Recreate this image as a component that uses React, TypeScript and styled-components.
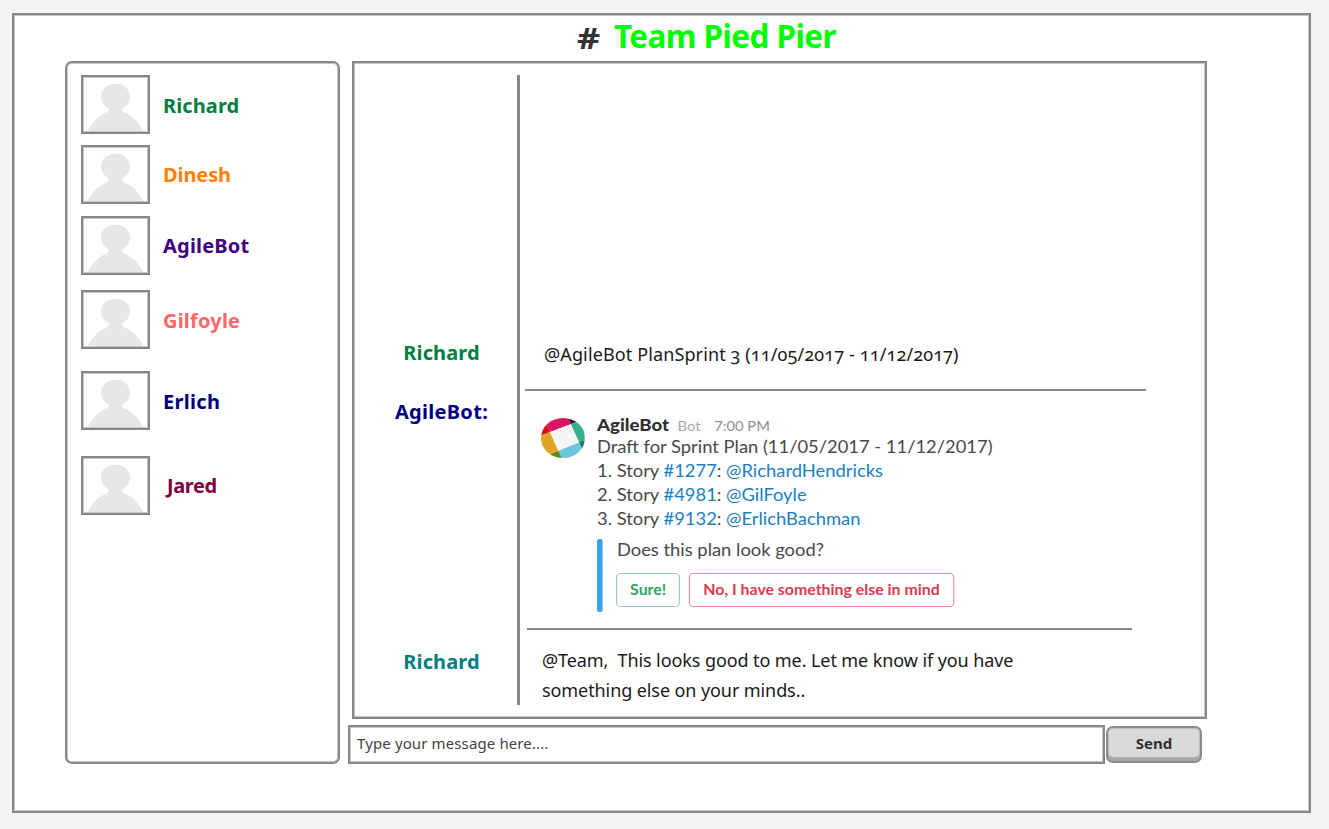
import React from 'react';
import styled, { createGlobalStyle, css } from 'styled-components';

const GlobalStyle = createGlobalStyle`
  *, *::before, *::after { box-sizing: border-box; }
  body {
    margin: 0;
    background: #f4f4f4;
    font-family: "Noto Sans", "Open Sans", sans-serif;
    color: #1a1a1a;
  }
`;

const outline = css`
  background: #fff;
  border: 2px solid #888;
  box-shadow: inset 0 0 0 1px #c6c6c6;
`;

const Page = styled.div`
  padding: 13px 18px 16px 12px;
  height: 829px;
`;

const Frame = styled.main`
  ${outline}
  width: 1299px;
  height: 800px;
`;

const Header = styled.header`
  display: flex;
  align-items: flex-start;
  height: 46px;
  padding-left: 563px;
  gap: 14px;
`;

const Hash = styled.span`
  width: 23px;
  font-size: 29px;
  line-height: 46px;
  font-weight: 700;
  color: #333;
  transform: scaleX(1.24);
  transform-origin: left;
`;

const Title = styled.h1`
  margin: 0;
  font-size: 31.5px;
  line-height: 42px;
  font-weight: 700;
  letter-spacing: -0.6px;
  color: #0f0;
  white-space: nowrap;
`;

const Body = styled.div`
  display: flex;
  align-items: flex-start;
  gap: 12px;
  padding-left: 51px;
`;

const Sidebar = styled.aside`
  ${outline}
  width: 275px;
  height: 703px;
  border-radius: 7px;
  padding: 12px 14px;
`;

const Member = styled.div<{ $before: number }>`
  display: flex;
  align-items: center;
  height: 59px;
  margin-top: ${(p) => p.$before}px;
`;

const AvatarBox = styled.div`
  ${outline}
  width: 69px;
  height: 59px;
  flex: none;

  svg { display: block; }
`;

const Name = styled.span<{ $color: string; $indent?: number; $drop?: number; $spacing?: number }>`
  margin-left: ${(p) => p.$indent ?? 0}px;
  padding-top: ${(p) => p.$drop ?? 0}px;
  font-size: 20px;
  line-height: 28px;
  font-weight: 700;
  letter-spacing: ${(p) => p.$spacing ?? 0.1}px;
  color: ${(p) => p.$color};
  white-space: nowrap;
`;

const Main = styled.section`
  display: flex;
  flex-direction: column;
  gap: 6px;
`;

const Chat = styled.div`
  ${outline}
  display: flex;
  width: 855px;
  height: 658px;
  padding: 12px 0;
`;

const Senders = styled.div`
  display: flex;
  flex-direction: column;
  align-items: center;
  width: 163px;
  padding-left: 12px;
`;

const Sender = styled.div<{ $before: number }>`
  height: 28px;
  margin-top: ${(p) => p.$before}px;
`;

const Rule = styled.div`
  width: 3px;
  background: #888;
`;

const Feed = styled.div`
  display: flex;
  flex-direction: column;
`;

const Message = styled.p<{ $before: number; $indent: number; $spacing: number }>`
  margin: ${(p) => p.$before}px 0 0 ${(p) => p.$indent}px;
  font-size: 18px;
  line-height: 30px;
  letter-spacing: ${(p) => p.$spacing}px;
  font-feature-settings: "onum";
  white-space: pre;
`;

const Divider = styled.div<{ $before: number; $indent: number; $width: number }>`
  width: ${(p) => p.$width}px;
  height: 2px;
  margin: ${(p) => p.$before}px 0 0 ${(p) => p.$indent}px;
  background: #888;
`;

const BotCard = styled.article`
  display: flex;
  height: 199px;
  width: 400px;
  margin: 22px 0 0 21px;
  font-family: Lato, "Open Sans", sans-serif;
  color: #48484a;
  transform: scaleX(1.12);
  transform-origin: left top;
  white-space: nowrap;
`;

const BotLogo = styled.svg`
  flex: none;
  width: 39.3px;
  height: 40px;
  margin: 5px 10.7px 0 0;
`;

const BotHeader = styled.div`
  display: flex;
  align-items: baseline;
  height: 22px;
  line-height: 24px;
`;

const BotName = styled.strong`
  font-size: 16.6px;
  font-weight: 900;
  color: #2f3033;
`;

const BotTag = styled.span`
  margin-left: 6.5px;
  padding: 0 1px;
  font-size: 13.4px;
  line-height: 14px;
  background: #fafafa;
  color: #aaa;
`;

const BotTime = styled.time`
  margin-left: 11px;
  font-size: 13.2px;
  color: #8d8d91;
`;

const BotLine = styled.div`
  font-size: 16.4px;
  line-height: 24px;
`;

const Link = styled.a`
  color: #1a80c0;
`;

const Quote = styled.div`
  display: flex;
  height: 73px;
  margin-top: 8px;
`;

const QuoteBar = styled.div`
  width: 4.8px;
  border-radius: 2px;
  background: #3aa3e3;
`;

const QuoteBody = styled.div`
  margin-left: 12.4px;
`;

const Question = styled.div`
  font-size: 16.4px;
  line-height: 22px;
  padding-left: 0.6px;
`;

const Actions = styled.div`
  display: flex;
  gap: 8px;
  margin-top: 12px;
`;

const Action = styled.button<{ $color: string; $edge: string; $width: number }>`
  width: ${(p) => p.$width}px;
  height: 34px;
  padding: 0 0 1px;
  border: 1px solid ${(p) => p.$edge};
  border-radius: 4px;
  background: #fff;
  font: 700 14.2px Lato, "Open Sans", sans-serif;
  color: ${(p) => p.$color};
`;

const Composer = styled.div`
  display: flex;
  align-items: flex-start;
  gap: 1px;
  margin-left: -4px;
`;

const Field = styled.div`
  ${outline}
  width: 757px;
  height: 39px;
  padding-left: 7px;
  font-size: 15px;
  line-height: 33px;
  letter-spacing: 0.12px;
  color: #444;
`;

const Send = styled.button`
  width: 96px;
  height: 37px;
  margin-top: 1px;
  padding: 0 0 3px;
  border: 2px solid #8c8c8c;
  border-radius: 7px;
  background: #d9d9d9;
  box-shadow: inset 0 -4px 0 #aaa, inset 0 0 0 1px #bcbcbc;
  font: 700 15px "Noto Sans", "Open Sans", sans-serif;
  color: #333;
`;

const members = [
  { name: 'Richard', color: '#008040', before: 0, indent: 13, drop: 2 },
  { name: 'Dinesh', color: '#ff8000', before: 11, indent: 13, drop: 0, spacing: -0.1 },
  { name: 'AgileBot', color: '#400080', before: 12, indent: 13, drop: 0, spacing: 0.2 },
  { name: 'Gilfoyle', color: '#ff6666', before: 15, indent: 13, drop: 2, spacing: 0.2 },
  { name: 'Erlich', color: '#000080', before: 22, indent: 13, drop: 2, spacing: 0.3 },
  { name: 'Jared', color: '#800040', before: 26, indent: 17, drop: 0, spacing: -0.4 },
];

const stories = [
  { id: '#1277', owner: '@RichardHendricks' },
  { id: '#4981', owner: '@GilFoyle' },
  { id: '#9132', owner: '@ErlichBachman' },
];

function Avatar() {
  return (
    <AvatarBox>
      <svg width="65" height="55" viewBox="0 0 65 55">
        <path
          fill="#e7e7e7"
          d="M32.5 6.700C40.800 6.700 47 12 47 19.200C47 24.500 44.200 28 41.200 30C38.600 31.700 38.600 34 41.500 35.600C49.500 38.500 55.500 45.500 60.300 54H4.700C9.500 45.500 15.500 38.500 23.500 35.600C26.400 34 26.400 31.700 23.800 30C20.800 28 18 24.500 18 19.200C18 12 24.200 6.700 32.500 6.700Z"
        />
      </svg>
    </AvatarBox>
  );
}

function Logo() {
  return (
    <BotLogo viewBox="0 0 44 40" preserveAspectRatio="none">
      <defs>
        <clipPath id="disc">
          <ellipse cx="22" cy="20" rx="22" ry="20" />
        </clipPath>
      </defs>
      <g clipPath="url(#disc)">
        <path fill="#d9155f" d="M9 14L-1 -8.500L22 -15L29.700 6.300Z" />
        <path fill="#3a1440" d="M29.700 6.300L22 -13L60 -20L50.400 -1.400Z" />
        <path fill="#34b28c" d="M29.700 6.300L50.400 -1.400L60 16L38 24.300Z" />
        <path fill="#1b7f63" d="M38 24.300L60 16L60 50L46.300 43Z" />
        <path fill="#6cc5d8" d="M38 24.300L46.300 43L25.600 51.400L17.300 32.700Z" />
        <path fill="#5f8a22" d="M17.300 32.700L25.600 51.400L-5 60L-3.400 41.100Z" />
        <path fill="#e0a323" d="M17.300 32.700L-3.400 41.100L-11.700 21.700L9 14Z" />
        <path fill="#d01218" d="M9 14L-11.700 21.700L-15 -10L-1 -8.500Z" />
        <path fill="#f5f5f5" d="M9 14L29.700 6.300L38 24.300L17.300 32.700Z" />
      </g>
    </BotLogo>
  );
}

export default function App() {
  return (
    <Page>
      <GlobalStyle />
      <Frame>
        <Header>
          <Hash>#</Hash>
          <Title>Team Pied Pier</Title>
        </Header>
        <Body>
          <Sidebar>
            {members.map((m) => (
              <Member key={m.name} $before={m.before}>
                <Avatar />
                <Name $color={m.color} $indent={m.indent} $drop={m.drop} $spacing={m.spacing}>
                  {m.name}
                </Name>
              </Member>
            ))}
          </Sidebar>
          <Main>
            <Chat>
              <Senders>
                <Sender $before={264}><Name $color="#008040">Richard</Name></Sender>
                <Sender $before={31}><Name $color="#000080" $spacing={0.3}>AgileBot:</Name></Sender>
                <Sender $before={222}><Name $color="#008080">Richard</Name></Sender>
              </Senders>
              <Rule />
              <Feed>
                <Message $before={264} $indent={24} $spacing={0.12}>
                  @AgileBot PlanSprint 3 (11/05/2017 - 11/12/2017)
                </Message>
                <Divider $before={20} $indent={5} $width={621} />
                <BotCard>
                  <Logo />
                  <div>
                    <BotHeader>
                      <BotName>AgileBot</BotName>
                      <BotTag>Bot</BotTag>
                      <BotTime>7:00 PM</BotTime>
                    </BotHeader>
                    <BotLine>Draft for Sprint Plan (11/05/2017 - 11/12/2017)</BotLine>
                    {stories.map((s, i) => (
                      <BotLine key={s.id}>
                        {i + 1}. Story <Link>{s.id}</Link>: <Link>{s.owner}</Link>
                      </BotLine>
                    ))}
                    <Quote>
                      <QuoteBar />
                      <QuoteBody>
                        <Question>Does this plan look good?</Question>
                        <Actions>
                          <Action $color="#2fa765" $edge="#8fd0ab" $width={57}>Sure!</Action>
                          <Action $color="#dc3a51" $edge="#ec8e9b" $width={236.6}>No, I have something else in mind</Action>
                        </Actions>
                      </QuoteBody>
                    </Quote>
                  </div>
                </BotCard>
                <Divider $before={16} $indent={7} $width={605} />
                <Message $before={15} $indent={22} $spacing={-0.09}>
                  {'@Team,  This looks good to me. Let me know if you have\nsomething else on your minds..'}
                </Message>
              </Feed>
            </Chat>
            <Composer>
              <Field>Type your message here....</Field>
              <Send>Send</Send>
            </Composer>
          </Main>
        </Body>
      </Frame>
    </Page>
  );
}
